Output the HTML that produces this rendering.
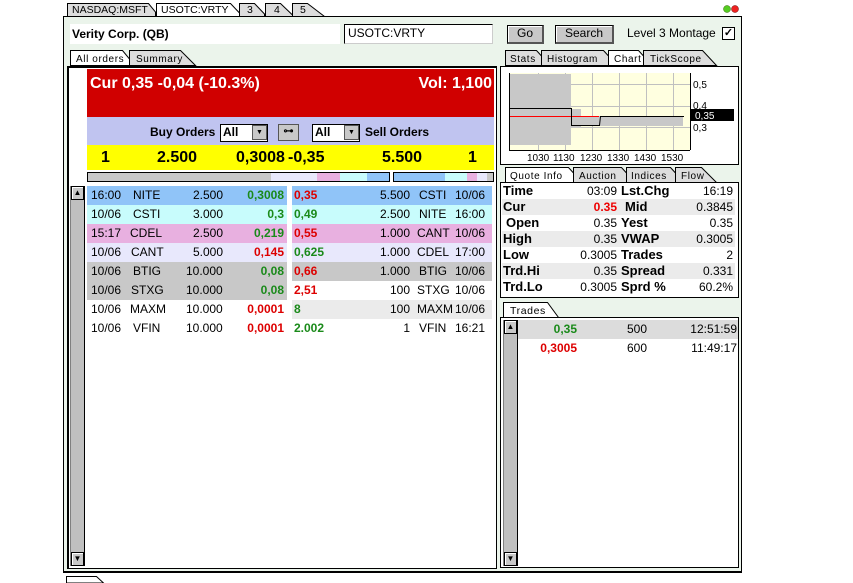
<!DOCTYPE html>
<html><head><meta charset="utf-8"><style>
*{margin:0;padding:0;box-sizing:border-box}
body{width:853px;height:583px;background:#fff;position:relative;overflow:hidden;font-family:"Liberation Sans",sans-serif;font-size:12px;color:#000}
.a{position:absolute}
.b{position:absolute;border:1px solid #000}
.row{position:absolute;height:19px;font-size:12px;line-height:19px;white-space:nowrap}
.row span{position:absolute;top:0}
.g{color:#1a8a1a;font-weight:bold}
.r{color:#d00;font-weight:bold}
.btn{position:absolute;background:#c8c8c8;border:1px solid #000;border-right:2px solid #555;border-bottom:2px solid #555;box-shadow:inset 1px 1px 0 #fff;text-align:center;font-size:12px;line-height:15px}
.sb{position:absolute;background:#c0c0c0;border-left:1px solid #808080;border-right:1px solid #000}
.arr{position:absolute;left:0;width:13px;height:14px;background:#c8c8c8;border:1px solid #000;box-shadow:inset 1px 1px 0 #fff;font-size:8px;text-align:center;line-height:12px}
.q{position:absolute;left:1px;width:233px;height:16px;font-size:12px;line-height:16px}
.q span{position:absolute;top:0}
.q .l{font-weight:bold;font-size:13px}
.ls text{letter-spacing:0.6px}
</style></head><body>

<svg class="a" style="left:0;top:0" width="853" height="17">
<g stroke="#000" stroke-width="1">
<polygon points="67.5,16.5 67.5,3.5 148.5,3.5 155.5,12 155.5,16.5" fill="#ddd"/>
<polygon points="239.5,16.5 239.5,3.5 254.5,3.5 264.5,14 264.5,16.5" fill="#ddd"/>
<polygon points="265.5,16.5 265.5,3.5 280.5,3.5 292.5,15 292.5,16.5" fill="#ddd"/>
<polygon points="292.5,16.5 292.5,3.5 307.5,3.5 324.5,16.5" fill="#ddd"/>
<polygon points="156.5,16.5 156.5,3.5 230.5,3.5 239.5,13 239.5,16.5" fill="#fff"/>
</g>
<g font-family="Liberation Sans" font-size="10.5" fill="#000">
<text x="72" y="13">NASDAQ:MSFT</text><text x="161" y="13">USOTC:VRTY</text>
<text x="247" y="13">3</text><text x="274" y="13">4</text><text x="300" y="13">5</text>
</g>
<circle cx="727" cy="9" r="3.5" fill="#5c2" stroke="#360" stroke-width=".5"/>
<circle cx="735" cy="9" r="3.5" fill="#e22" stroke="#600" stroke-width=".5"/>
</svg>

<div class="b" style="left:63px;top:16px;width:679px;height:557px;background:#ebf4eb;border-width:1px 1px 2px 1px"></div>
<div class="a" style="left:70px;top:24px;width:270px;height:20px;background:#fff;font-weight:bold;font-size:12px;line-height:20px;padding-left:2px">Verity Corp. (QB)</div>
<div class="a" style="left:344px;top:24px;width:149px;height:20px;background:#fff;border:1px solid #000;border-right-color:#ccc;border-bottom-color:#ccc;font-size:12px;line-height:17px;padding-left:3px">USOTC:VRTY</div>
<div class="btn" style="left:507px;top:25px;width:37px;height:19px">Go</div>
<div class="btn" style="left:555px;top:25px;width:59px;height:19px">Search</div>
<div class="a" style="left:627px;top:25px;font-size:12px;line-height:17px">Level 3 Montage</div>
<div class="a" style="left:722px;top:27px;width:13px;height:13px;background:#fff;border:1px solid #000;font-size:11px;line-height:11px;text-align:center;font-weight:bold">✓</div>

<svg class="a ls" style="left:0;top:48px" width="500" height="18">
<g stroke="#000" stroke-width="1">
<polygon points="129.5,17.5 129.5,2.5 180.5,2.5 195.5,17.5" fill="#ddd"/>
<polygon points="70.5,17.5 70.5,2.5 122.5,2.5 129.5,11 129.5,17.5" fill="#fff"/>
</g>
<g font-family="Liberation Sans" font-size="10" fill="#000"><text x="76" y="14">All orders</text><text x="136" y="14">Summary</text></g>
</svg>

<div class="b" style="left:67px;top:66px;width:430px;height:503px;background:#fff;border-width:2px 1px 1px 2px"></div>
<div class="a" style="left:87px;top:69px;width:407px;height:48px;background:#d00000;color:#fff;font-weight:bold;font-size:16px">
<span class="a" style="left:3px;top:6px">Cur 0,35 -0,04 (-10.3%)</span><span class="a" style="right:2px;top:6px">Vol: 1,100</span></div>
<div class="a" style="left:87px;top:117px;width:407px;height:28px;background:#c0c4f0;font-weight:bold;font-size:12px">
<span class="a" style="left:63px;top:8px">Buy Orders</span>
<div class="a" style="left:133px;top:7px;width:48px;height:18px;background:#fff;border:1px solid #000;font-size:12px;line-height:15px;padding-left:2px">All<div class="a" style="right:0;top:0;width:15px;height:15px;background:#c8c8c8;border:1px solid #555;font-size:7px;text-align:center;line-height:13px">▼</div></div>
<div class="a" style="left:191px;top:7px;width:21px;height:17px;background:#c8c8c8;border:1px solid #555;font-size:10px;line-height:14px;text-align:center">⊶</div>
<div class="a" style="left:225px;top:7px;width:48px;height:18px;background:#fff;border:1px solid #000;font-size:12px;line-height:15px;padding-left:2px">All<div class="a" style="right:0;top:0;width:15px;height:15px;background:#c8c8c8;border:1px solid #555;font-size:7px;text-align:center;line-height:13px">▼</div></div>
<span class="a" style="left:278px;top:8px">Sell Orders</span>
</div>
<div class="a" style="left:87px;top:145px;width:407px;height:25px;background:#ffff00;font-weight:bold;font-size:16px">
<span class="a" style="left:14px;top:4px">1</span><span class="a" style="left:70px;top:4px">2.500</span><span class="a" style="left:149px;top:4px">0,3008</span><span class="a" style="left:201px;top:4px">-0,35</span><span class="a" style="left:295px;top:4px">5.500</span><span class="a" style="left:381px;top:4px">1</span></div>
<div class="b" style="left:87px;top:172px;width:303px;height:10px;background:linear-gradient(to right,#c8c8c8 0 183px,#e8e8fc 183px 229px,#e8b0e0 229px 252px,#c8fcfc 252px 279px,#90c4f8 279px)"></div>
<div class="b" style="left:393px;top:172px;width:101px;height:10px;background:linear-gradient(to right,#90c4f8 0 51px,#c8fcfc 51px 73px,#e8b0e0 73px 83px,#e8e8fc 83px 93px,#c8c8c8 93px)"></div>

<div class="sb" style="left:70px;top:186px;width:15px;height:380px"><div class="arr" style="top:0">▲</div><div class="arr" style="bottom:0">▼</div></div>

<div class="row" style="left:87px;top:186px;width:200px;background:#90c4f8"><span style="left:4px">16:00</span><span style="left:46px">NITE</span><span style="left:106px">2.500</span><span class="g" style="right:3px">0,3008</span></div>
<div class="row" style="left:87px;top:205px;width:200px;background:#c8fcfc"><span style="left:4px">10/06</span><span style="left:46px">CSTI</span><span style="left:106px">3.000</span><span class="g" style="right:3px">0,3</span></div>
<div class="row" style="left:87px;top:224px;width:200px;background:#e8b0e0"><span style="left:4px">15:17</span><span style="left:43px">CDEL</span><span style="left:106px">2.500</span><span class="g" style="right:3px">0,219</span></div>
<div class="row" style="left:87px;top:243px;width:200px;background:#e8e8fc"><span style="left:4px">10/06</span><span style="left:44px">CANT</span><span style="left:106px">5.000</span><span class="r" style="right:3px">0,145</span></div>
<div class="row" style="left:87px;top:262px;width:200px;background:#c8c8c8"><span style="left:4px">10/06</span><span style="left:46px">BTIG</span><span style="left:99px">10.000</span><span class="g" style="right:3px">0,08</span></div>
<div class="row" style="left:87px;top:281px;width:200px;background:#c8c8c8"><span style="left:4px">10/06</span><span style="left:44px">STXG</span><span style="left:99px">10.000</span><span class="g" style="right:3px">0,08</span></div>
<div class="row" style="left:87px;top:300px;width:200px"><span style="left:4px">10/06</span><span style="left:43px">MAXM</span><span style="left:99px">10.000</span><span class="r" style="right:3px">0,0001</span></div>
<div class="row" style="left:87px;top:319px;width:200px"><span style="left:4px">10/06</span><span style="left:46px">VFIN</span><span style="left:99px">10.000</span><span class="r" style="right:3px">0,0001</span></div>
<div class="row" style="left:292px;top:186px;width:200px;background:#90c4f8"><span class="r" style="left:2px">0,35</span><span style="right:82px">5.500</span><span style="left:127px">CSTI</span><span style="left:163px">10/06</span></div>
<div class="row" style="left:292px;top:205px;width:200px;background:#c8fcfc"><span class="g" style="left:2px">0,49</span><span style="right:82px">2.500</span><span style="left:127px">NITE</span><span style="left:163px">16:00</span></div>
<div class="row" style="left:292px;top:224px;width:200px;background:#e8b0e0"><span class="r" style="left:2px">0,55</span><span style="right:82px">1.000</span><span style="left:125px">CANT</span><span style="left:163px">10/06</span></div>
<div class="row" style="left:292px;top:243px;width:200px;background:#e8e8fc"><span class="g" style="left:2px">0,625</span><span style="right:82px">1.000</span><span style="left:125px">CDEL</span><span style="left:163px">17:00</span></div>
<div class="row" style="left:292px;top:262px;width:200px;background:#c8c8c8"><span class="r" style="left:2px">0,66</span><span style="right:82px">1.000</span><span style="left:127px">BTIG</span><span style="left:163px">10/06</span></div>
<div class="row" style="left:292px;top:281px;width:200px"><span class="r" style="left:2px">2,51</span><span style="right:82px">100</span><span style="left:125px">STXG</span><span style="left:163px">10/06</span></div>
<div class="row" style="left:292px;top:300px;width:200px;background:#ebebeb"><span class="g" style="left:2px">8</span><span style="right:82px">100</span><span style="left:125px">MAXM</span><span style="left:163px">10/06</span></div>
<div class="row" style="left:292px;top:319px;width:200px"><span class="g" style="left:2px">2.002</span><span style="right:82px">1</span><span style="left:127px">VFIN</span><span style="left:163px">16:21</span></div>

<svg class="a ls" style="left:500px;top:48px" width="240" height="18">
<g stroke="#000" stroke-width="1">
<polygon points="5.5,17.5 5.5,2.5 36.5,2.5 41.5,8 41.5,17.5" fill="#ddd"/>
<polygon points="41.5,17.5 41.5,2.5 103.5,2.5 108.5,8 108.5,17.5" fill="#ddd"/>
<polygon points="143.5,17.5 143.5,2.5 202.5,2.5 216.5,17.5" fill="#ddd"/>
<polygon points="108.5,17.5 108.5,2.5 138.5,2.5 143.5,8 143.5,17.5" fill="#fff"/>
</g>
<g font-family="Liberation Sans" font-size="10" fill="#000"><text x="10" y="14">Stats</text><text x="47" y="14">Histogram</text><text x="114" y="14">Chart</text><text x="150" y="14">TickScope</text></g>
</svg>

<div class="b" style="left:500px;top:66px;width:239px;height:99px;background:#fff"></div>
<svg class="a" style="left:500px;top:66px" width="239" height="99">
<rect x="9" y="7" width="181" height="77" fill="#ffffe0"/>
<g stroke="#c0c0c0" stroke-width="1">
<line x1="38.5" y1="7" x2="38.5" y2="84"/><line x1="65.5" y1="7" x2="65.5" y2="84"/><line x1="92.5" y1="7" x2="92.5" y2="84"/><line x1="119.5" y1="7" x2="119.5" y2="84"/><line x1="146.5" y1="7" x2="146.5" y2="84"/><line x1="173.5" y1="7" x2="173.5" y2="84"/>
<line x1="9" y1="18.5" x2="190" y2="18.5"/><line x1="9" y1="40.5" x2="190" y2="40.5"/><line x1="9" y1="61.5" x2="190" y2="61.5"/>
</g>
<rect x="10" y="8" width="61" height="71" fill="#c8c8c8"/>
<rect x="71" y="43" width="10" height="19" fill="#c8c8c8"/>
<rect x="81" y="50" width="102" height="10" fill="#c8c8c8"/>
<line x1="10" y1="50.5" x2="99" y2="50.5" stroke="#f00" stroke-width="1"/>
<polyline points="10,42.5 71.5,42.5 71.5,59.5 99.5,59.5 100.5,50.5 184,50.5" fill="none" stroke="#000" stroke-width="1"/>
<line x1="9.5" y1="7" x2="9.5" y2="84" stroke="#000"/><line x1="9" y1="84.5" x2="190" y2="84.5" stroke="#000"/><line x1="190.5" y1="7" x2="190.5" y2="84" stroke="#000"/>
<rect x="191" y="43" width="43" height="12" fill="#000"/>
<g font-family="Liberation Sans" font-size="10" fill="#000">
<text x="193" y="22">0,5</text><text x="193" y="43">0,4</text><text x="195" y="53" fill="#fff">0,35</text><text x="193" y="65">0,3</text>
<text x="27" y="95">1030</text><text x="53" y="95">1130</text><text x="80" y="95">1230</text><text x="107" y="95">1330</text><text x="134" y="95">1430</text><text x="161" y="95">1530</text>
</g>
</svg>

<svg class="a ls" style="left:500px;top:165px" width="240" height="18">
<g stroke="#000" stroke-width="1">
<polygon points="73.5,17.5 73.5,2.5 121.5,2.5 126.5,8 126.5,17.5" fill="#ddd"/>
<polygon points="126.5,17.5 126.5,2.5 170.5,2.5 175.5,8 175.5,17.5" fill="#ddd"/>
<polygon points="175.5,17.5 175.5,2.5 201.5,2.5 216.5,17.5" fill="#ddd"/>
<polygon points="5.5,17.5 5.5,2.5 68.5,2.5 73.5,8 73.5,17.5" fill="#fff"/>
</g>
<g font-family="Liberation Sans" font-size="10" fill="#000"><text x="10" y="14">Quote Info</text><text x="79" y="14">Auction</text><text x="131" y="14">Indices</text><text x="181" y="14">Flow</text></g>
</svg>
<div class="b" style="left:500px;top:182px;width:239px;height:116px;background:#fff">
<div class="q" style="top:0"><span class="l" style="left:1px">Time</span><span style="right:118px">03:09</span><span class="l" style="left:119px">Lst.Chg</span><span style="right:2px">16:19</span></div>
<div class="q" style="top:16px;background:#ebebeb"><span class="l" style="left:1px">Cur</span><span style="right:118px;color:#e00;font-weight:bold">0.35</span><span class="l" style="left:123px">Mid</span><span style="right:2px">0.3845</span></div>
<div class="q" style="top:32px"><span class="l" style="left:4px">Open</span><span style="right:118px">0.35</span><span class="l" style="left:119px">Yest</span><span style="right:2px">0.35</span></div>
<div class="q" style="top:48px;background:#ebebeb"><span class="l" style="left:1px">High</span><span style="right:118px">0.35</span><span class="l" style="left:119px">VWAP</span><span style="right:2px">0.3005</span></div>
<div class="q" style="top:64px"><span class="l" style="left:1px">Low</span><span style="right:118px">0.3005</span><span class="l" style="left:119px">Trades</span><span style="right:2px">2</span></div>
<div class="q" style="top:80px;background:#ebebeb"><span class="l" style="left:1px">Trd.Hi</span><span style="right:118px">0.35</span><span class="l" style="left:119px">Spread</span><span style="right:2px">0.331</span></div>
<div class="q" style="top:96px"><span class="l" style="left:1px">Trd.Lo</span><span style="right:118px">0.3005</span><span class="l" style="left:119px">Sprd %</span><span style="right:2px">60.2%</span></div>
</div>

<svg class="a ls" style="left:500px;top:300px" width="80" height="18">
<polygon points="3.5,17.5 3.5,2.5 47.5,2.5 58.5,17.5" fill="#fff" stroke="#000"/>
<text x="10" y="14" font-family="Liberation Sans" font-size="10.5">Trades</text>
</svg>
<div class="b" style="left:500px;top:317px;width:239px;height:251px;background:#fff">
<div class="sb" style="left:2px;top:2px;width:15px;height:246px"><div class="arr" style="top:0">▲</div><div class="arr" style="bottom:0">▼</div></div>
<div class="row" style="left:17px;top:2px;width:220px;background:#dcdcdc"><span class="g" style="right:161px">0,35</span><span style="left:109px">500</span><span style="right:1px">12:51:59</span></div>
<div class="row" style="left:17px;top:21px;width:220px"><span class="r" style="right:161px">0,3005</span><span style="left:109px">600</span><span style="right:1px">11:49:17</span></div>
</div>

<svg class="a" style="left:60px;top:575px" width="60" height="8">
<polygon points="6.5,8 6.5,1.5 36.5,1.5 43.5,8" fill="#fff" stroke="#000"/>
</svg>
</body></html>
